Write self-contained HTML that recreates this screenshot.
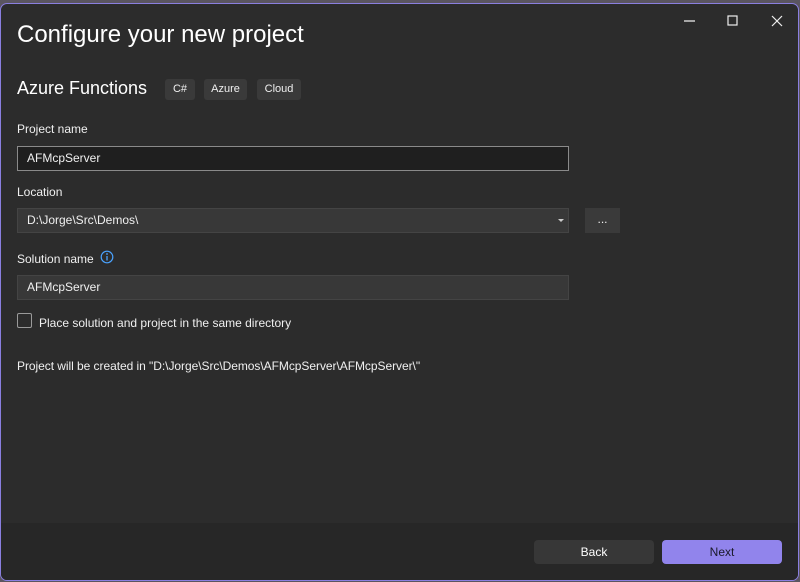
<!DOCTYPE html>
<html><head><meta charset="utf-8"><style>
*{box-sizing:border-box;margin:0;padding:0}
body{width:800px;height:582px;background:#5a5560;font-family:"Liberation Sans",sans-serif;color:#f0f0f0;position:relative;overflow:hidden;font-size:12px}
.win{position:absolute;left:0;top:3px;width:799px;height:578px;background:#2c2c2c;border:1px solid #8a7fe0;border-radius:7px;overflow:hidden}
.abs{position:absolute}
.footer{position:absolute;left:0;right:0;top:519px;bottom:0;background:#272727}
.in{position:absolute;left:16px;width:552px;height:25px;padding-left:9px;line-height:23px;font-size:12px}
.tag{position:absolute;top:75px;height:21px;background:#3a3a3a;border-radius:3px;font-size:11px;line-height:21px;text-align:center}
.btn{position:absolute;top:536px;height:24px;width:120px;border-radius:4px;text-align:center;line-height:24px;font-size:12px}
</style></head><body>
<div class="win">
<div class="abs" style="left:16px;top:17px;font-size:24px;color:#fff">Configure your new project</div>
<svg class="abs" style="left:680px;top:6px" width="110" height="20"><g stroke="#eee" stroke-width="1.2" fill="none"><line x1="3" y1="11" x2="14" y2="11"/><rect x="47" y="6" width="9" height="9"/><line x1="91" y1="6" x2="101" y2="16"/><line x1="101" y1="6" x2="91" y2="16"/></g></svg>
<div class="abs" style="left:16px;top:74px;font-size:18px;color:#fff">Azure Functions</div>
<div class="tag" style="left:164px;width:30px">C#</div>
<div class="tag" style="left:203px;width:43px">Azure</div>
<div class="tag" style="left:256px;width:44px">Cloud</div>
<div class="abs" style="left:16px;top:118px">Project name</div>
<div class="in" style="top:142px;background:#1f1f1f;border:1px solid #8a8a8a">AFMcpServer</div>
<div class="abs" style="left:16px;top:181px">Location</div>
<div class="in" style="top:204px;background:#383838;border:1px solid #444">D:\Jorge\Src\Demos\</div>
<div class="abs" style="left:557px;top:215px;width:0;height:0;border-left:3px solid transparent;border-right:3px solid transparent;border-top:3px solid #ccc"></div>
<div class="abs" style="left:584px;top:204px;width:35px;height:25px;background:#3a3a3a;text-align:center;line-height:22px">...</div>
<div class="abs" style="left:16px;top:248px">Solution name</div>
<svg class="abs" style="left:99px;top:246px" width="14" height="14"><circle cx="7" cy="7" r="5.8" stroke="#4aa3ff" stroke-width="1.2" fill="none"/><line x1="7" y1="6" x2="7" y2="10.5" stroke="#4aa3ff" stroke-width="1.3"/><circle cx="7" cy="4" r=".9" fill="#4aa3ff"/></svg>
<div class="in" style="top:271px;background:#383838;border:1px solid #444">AFMcpServer</div>
<div class="abs" style="left:16px;top:309px;width:15px;height:15px;border:1px solid #9a9a9a;border-radius:2px"></div>
<div class="abs" style="left:38px;top:312px">Place solution and project in the same directory</div>
<div class="abs" style="left:16px;top:355px;letter-spacing:-0.05px">Project will be created in "D:\Jorge\Src\Demos\AFMcpServer\AFMcpServer\"</div>
<div class="footer"></div>
<div class="btn" style="left:533px;background:#373737;color:#fff">Back</div>
<div class="btn" style="left:661px;background:#9184ec;color:#1a1a2a">Next</div>
</div>
</body></html>
